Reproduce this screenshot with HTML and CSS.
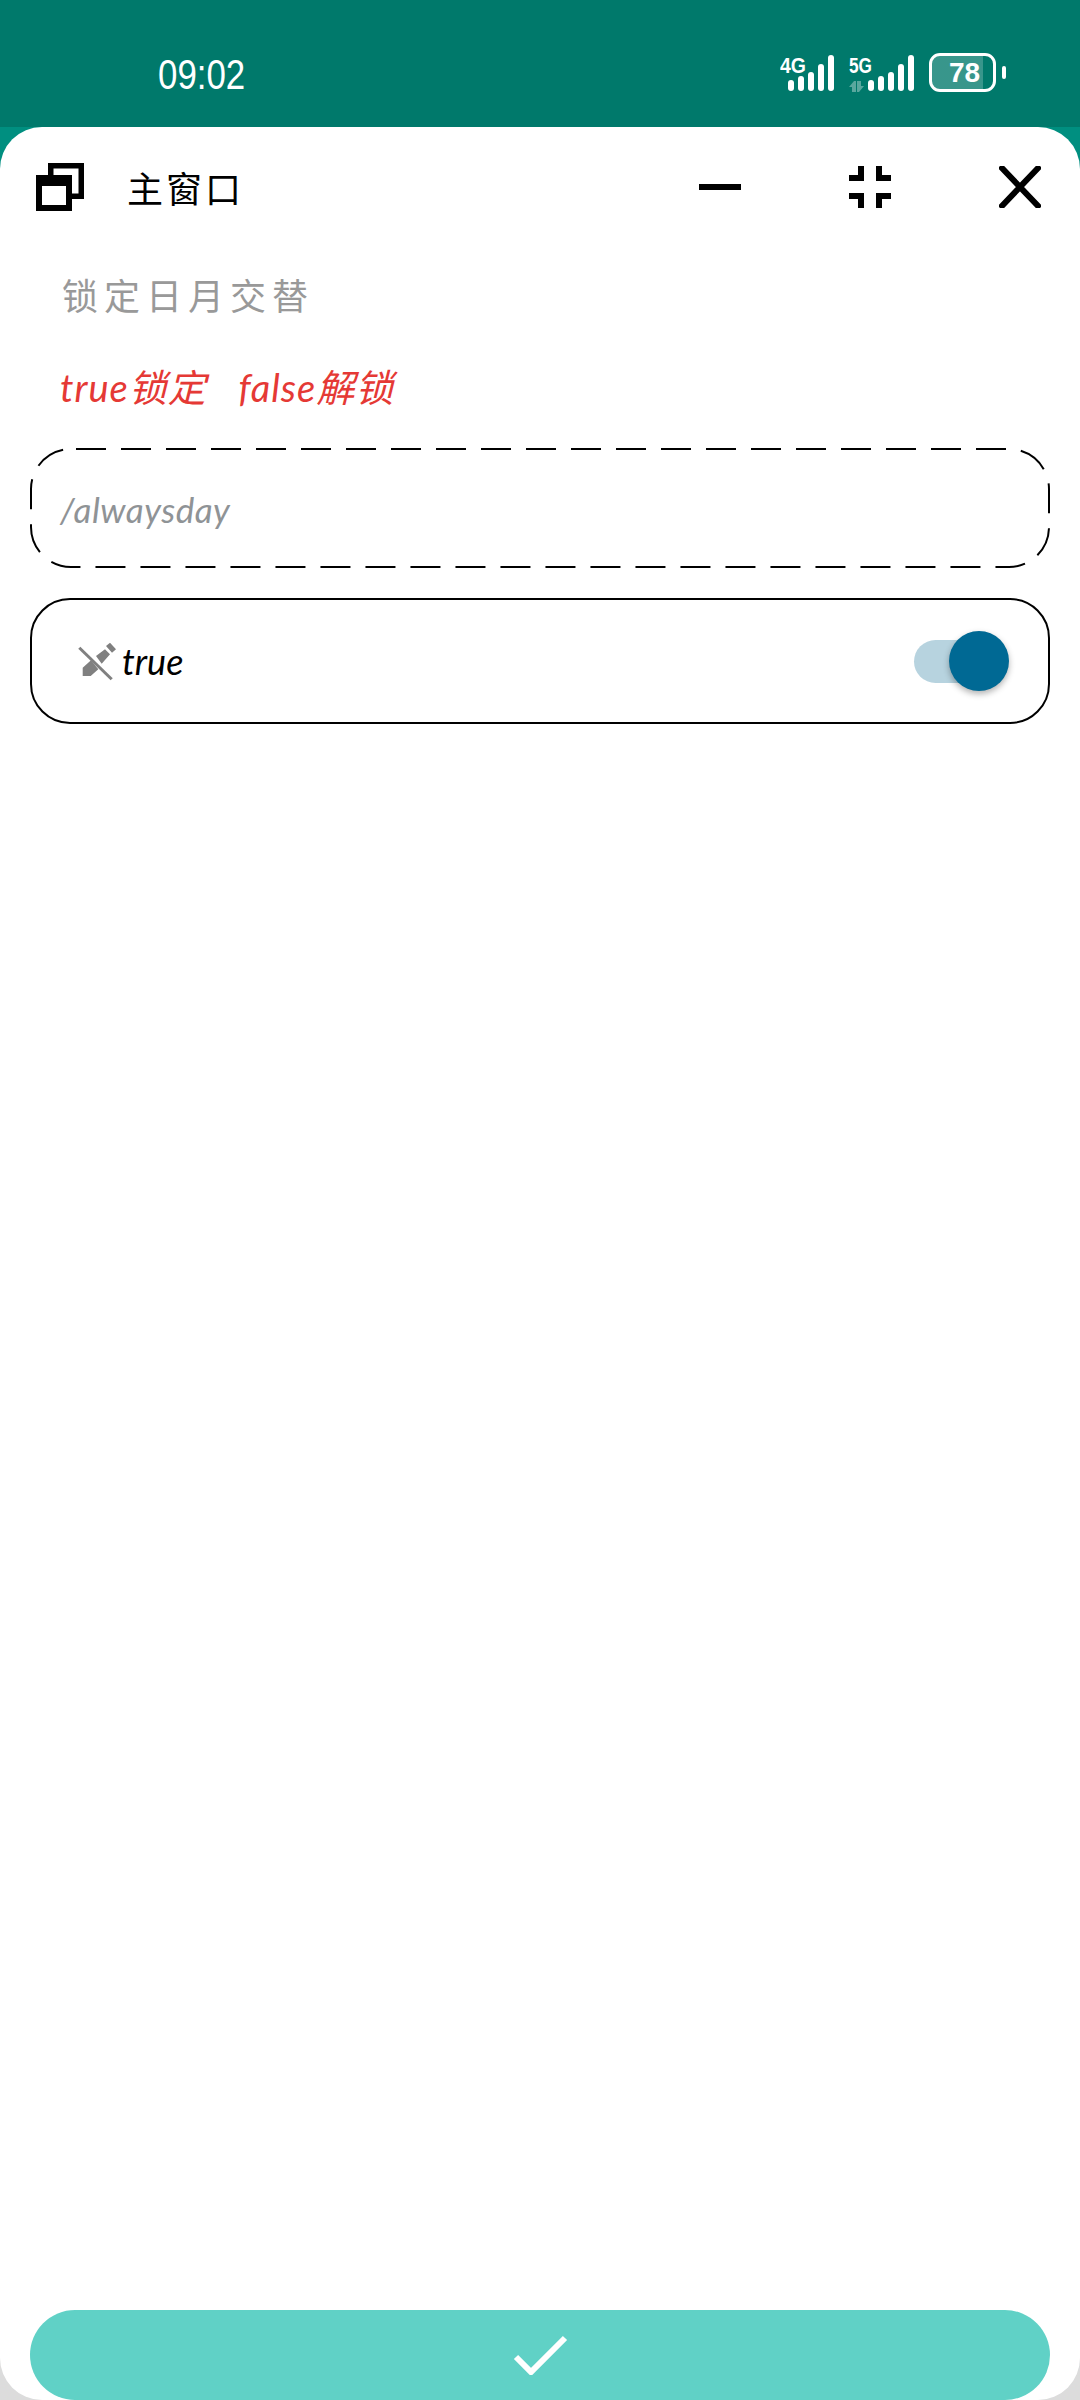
FILE: index.html
```html
<!DOCTYPE html>
<html lang="zh">

<head>
    <meta charset="UTF-8">
    <meta name="viewport" content="width=device-width, initial-scale=1.0">
    <title>主窗口</title>
    <link rel="stylesheet" href="styles.css">
</head>

<body>
    <div class="status-bar">
        <span class="clock">09:02</span>
        <div class="status-icons">
            <svg class="signal" width="56" height="40" viewBox="0 0 56 40">
                <text class="signal-label" x="0" y="20" textLength="26" lengthAdjust="spacingAndGlyphs">4G</text>
                <g class="bars">
                    <rect x="8" y="27" width="6" height="11" rx="3"/>
                    <rect x="18" y="23" width="6" height="15" rx="3"/>
                    <rect x="28" y="19" width="6" height="19" rx="3"/>
                    <rect x="38" y="11" width="6" height="27" rx="3"/>
                    <rect x="48" y="2" width="6" height="36" rx="3"/>
                </g>
            </svg>
            <svg class="signal" width="67" height="40" viewBox="0 0 67 40">
                <text class="signal-label" x="0" y="20" textLength="23" lengthAdjust="spacingAndGlyphs">5G</text>
                <path class="data-arrows" d="M5 28L0 34H3V39H7V28ZM10 39L15 33H12V28H8V39Z"/>
                <g class="bars">
                    <rect x="19" y="27" width="6" height="11" rx="3"/>
                    <rect x="29" y="23" width="6" height="15" rx="3"/>
                    <rect x="39" y="19" width="6" height="19" rx="3"/>
                    <rect x="49" y="11" width="6" height="27" rx="3"/>
                    <rect x="59" y="2" width="6" height="36" rx="3"/>
                </g>
            </svg>
            <div class="battery-wrap">
                <div class="battery">78</div>
                <div class="battery-nub"></div>
            </div>
        </div>
    </div>

    <div class="sheet">
        <div class="title-bar">
            <svg class="window-icon" width="48" height="48" viewBox="0 0 48 48">
                <rect x="12" y="0" width="36" height="36"/>
                <rect x="17.5" y="5.5" width="25" height="25" fill="#fff"/>
                <rect x="0" y="12" width="36" height="36"/>
                <rect x="6" y="23" width="24" height="19" fill="#fff"/>
            </svg>
            <span class="title">主窗口</span>
            <div class="window-buttons">
                <svg width="42" height="42" viewBox="0 0 42 42">
                    <rect x="0" y="18" width="42" height="6"/>
                </svg>
                <svg class="stroke-icon" width="42" height="42" viewBox="0 0 42 42">
                    <path d="M0 12H12V0M42 12H30V0M0 30H12V42M42 30H30V42"/>
                </svg>
                <svg class="stroke-icon" width="42" height="42" viewBox="0 0 42 42">
                    <path d="M1 0L41 42M41 0L1 42"/>
                </svg>
            </div>
        </div>

        <div class="content">
            <p class="label">锁定日月交替</p>
            <p class="hint">true锁定  false解锁</p>

            <div class="field">
                <svg class="dash-border" width="1020" height="120" viewBox="30 448 1020 120">
                    <path d="M76 449H1009A40 40 0 0 1 1049 489V527A40 40 0 0 1 1009 567H71A40 40 0 0 1 31 527V489A40 40 0 0 1 71 449Z"/>
                </svg>
                <span class="field-text">/alwaysday</span>
            </div>

            <div class="switch-row">
                <svg class="pencil-off" width="40" height="40" viewBox="0 0 40 40">
                    <path d="M4.7 26.7V35H12.7L20.3 28.3 13 19.3ZM18 15L27 8.3 32 13.3 23.7 22.7ZM28 5L32 1.7 38 8.3 34 11.7Z"/>
                    <path class="pencil-slash" d="M1.3 6.7L33.7 38.3"/>
                </svg>
                <span class="switch-text">true</span>
                <div class="switch">
                    <div class="switch-track"></div>
                    <div class="switch-thumb"></div>
                </div>
            </div>
        </div>

        <div class="confirm">
            <svg class="stroke-icon check" width="56" height="40" viewBox="0 0 56 40">
                <path d="M4 22L19 37 53 3"/>
            </svg>
        </div>
    </div>
</body>

</html>
```

FILE: styles.css
```css
* {
    box-sizing: border-box;
}

body {
    margin: 0;
    width: 1080px;
    height: 2400px;
    display: flex;
    flex-direction: column;
    overflow: hidden;
    font-family: "Noto Sans CJK SC", "Noto Sans", sans-serif;
    background: linear-gradient(#008f80 50%, #dcdcdc 50%);
}

p {
    margin: 0;
}

svg {
    display: block;
}

.status-bar {
    height: 127px;
    flex: none;
    background-color: #00796b;
    color: #fff;
    display: flex;
    justify-content: space-between;
    padding: 53px 74px 0 158px;
}

.clock {
    font-family: "Liberation Sans", sans-serif;
    font-size: 42px;
    line-height: 44px;
    transform: scaleX(0.83);
    transform-origin: left center;
}

.status-icons {
    display: flex;
    gap: 13px;
}

.signal-label {
    font-family: "Liberation Sans", sans-serif;
    font-size: 22px;
    font-weight: bold;
    fill: #fff;
}

.bars rect {
    fill: #fff;
}

.data-arrows {
    fill: rgba(255, 255, 255, 0.35);
}

.battery-wrap {
    display: flex;
    align-items: center;
    height: 39px;
}

.battery {
    width: 67px;
    height: 39px;
    border: 3px solid #fff;
    border-radius: 11px;
    background: linear-gradient(90deg, rgba(255, 255, 255, 0.22) 51px, transparent 51px);
    text-align: center;
    font-family: "Liberation Sans", sans-serif;
    font-size: 28px;
    font-weight: bold;
    line-height: 33px;
    padding-left: 4px;
}

.battery-nub {
    width: 4px;
    height: 13px;
    margin-left: 6px;
    background-color: #fff;
    border-radius: 2px;
}

.sheet {
    flex: 1;
    background-color: #fff;
    border-radius: 42px;
    display: flex;
    flex-direction: column;
}

.title-bar {
    height: 120px;
    flex: none;
    display: flex;
    align-items: center;
    padding: 0 39px 0 36px;
}

.title {
    margin-left: 43px;
    font-size: 36px;
    line-height: 44px;
    letter-spacing: 3px;
    color: #000;
}

.window-buttons {
    margin-left: auto;
    display: flex;
    gap: 108px;
}

.stroke-icon path {
    fill: none;
    stroke: #000;
    stroke-width: 6;
}

.content {
    flex: 1;
    padding: 17px 30px 0;
}

.label {
    padding-left: 32px;
    font-size: 36px;
    line-height: 60px;
    letter-spacing: 6px;
    color: #999;
}

.hint {
    margin-top: 33px;
    padding-left: 30px;
    font-family: "Lato", "Noto Sans CJK SC", sans-serif;
    font-style: italic;
    font-size: 38px;
    line-height: 60px;
    letter-spacing: 1px;
    word-spacing: 6px;
    color: #e53935;
    white-space: pre;
}

.field {
    position: relative;
    margin-top: 31px;
    height: 119px;
    padding-left: 30px;
    display: flex;
    align-items: center;
}

.dash-border {
    position: absolute;
    left: 0;
    top: 0;
}

.dash-border path {
    fill: none;
    stroke: #000;
    stroke-width: 2;
    stroke-dasharray: 30 15;
}

.field-text {
    margin-top: 3px;
    font-family: "Lato", sans-serif;
    font-style: italic;
    font-size: 35px;
    letter-spacing: 0.5px;
    color: #8f9396;
}

.switch-row {
    margin-top: 31px;
    height: 126px;
    border: 2px solid #000;
    border-radius: 40px;
    padding: 0 39px 0 46px;
    display: flex;
    align-items: center;
}

.pencil-off {
    fill: #808080;
}

.pencil-slash {
    fill: none;
    stroke: #808080;
    stroke-width: 3;
}

.switch-text {
    margin-left: 4px;
    font-family: "Lato", sans-serif;
    font-style: italic;
    font-size: 36px;
    color: #000;
}

.switch {
    position: relative;
    margin-left: auto;
    width: 95px;
    height: 60px;
    display: flex;
    align-items: center;
}

.switch-track {
    width: 80px;
    height: 43px;
    background-color: #b7d3df;
    border-radius: 22px;
}

.switch-thumb {
    position: absolute;
    right: 0;
    top: 0;
    width: 60px;
    height: 60px;
    background-color: #006994;
    border-radius: 50%;
    box-shadow: 0 3px 6px rgba(0, 0, 0, 0.3);
}

.confirm {
    flex: none;
    height: 90px;
    margin: 0 30px;
    background-color: #60d1c6;
    border-radius: 45px;
    display: flex;
    justify-content: center;
    align-items: center;
}

.check path {
    stroke: #fff;
}
```
